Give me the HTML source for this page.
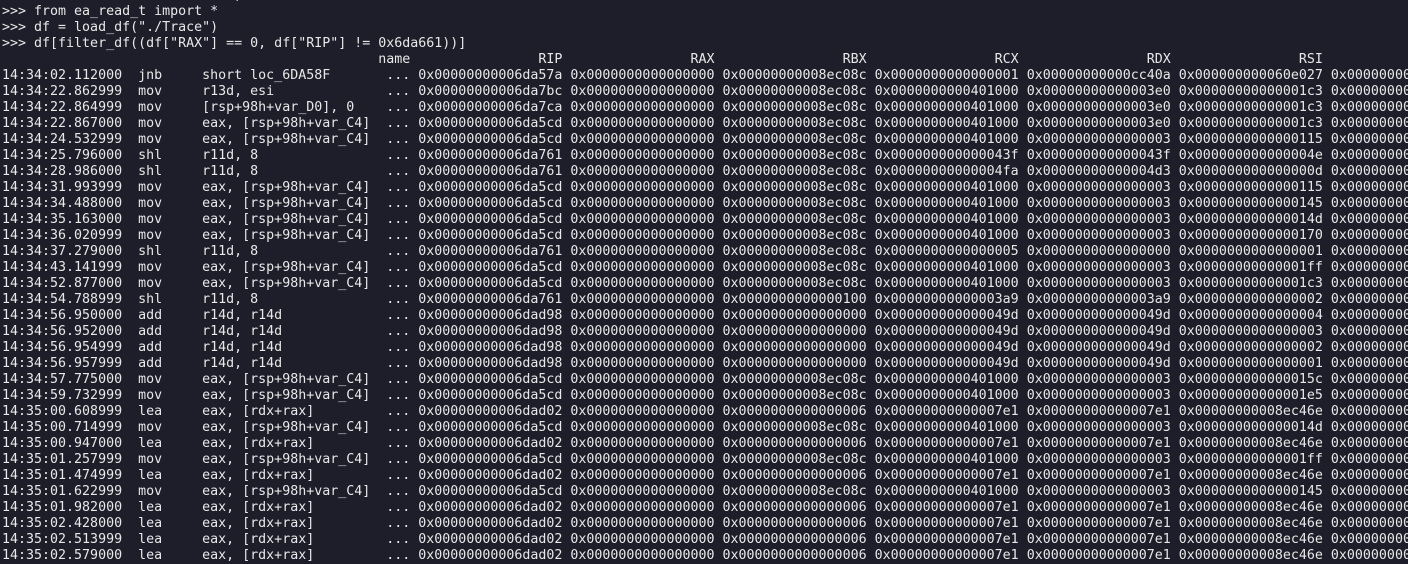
<!DOCTYPE html>
<html><head><meta charset="utf-8"><style>
html,body{margin:0;padding:0;width:1408px;height:558px;overflow:hidden;background:#1d1e29;}
pre{margin:0;position:absolute;left:2px;top:4px;font-family:"DejaVu Sans Mono","Liberation Mono",monospace;font-size:13.3px;line-height:16px;color:#e8e8e8;white-space:pre;}
#frag{position:absolute;left:2px;top:-12px;}
</style></head><body>
<pre id="frag">                             )</pre>
<pre id="t"></pre>
<script>
var C4="eax, [rsp+98h+var_C4]",S="r11d, 8",A="r14d, r14d",L="eax, [rdx+rax]";
var rows=[
["14:34:02.112000","jnb","short loc_6DA58F",["6da57a","0","8ec08c","1","cc40a","60e027"]],
["14:34:22.862999","mov","r13d, esi",["6da7bc","0","8ec08c","401000","3e0","1c3"]],
["14:34:22.864999","mov","[rsp+98h+var_D0], 0",["6da7ca","0","8ec08c","401000","3e0","1c3"]],
["14:34:22.867000","mov",C4,["6da5cd","0","8ec08c","401000","3e0","1c3"]],
["14:34:24.532999","mov",C4,["6da5cd","0","8ec08c","401000","3","115"]],
["14:34:25.796000","shl",S,["6da761","0","8ec08c","43f","43f","4e"]],
["14:34:28.986000","shl",S,["6da761","0","8ec08c","4fa","4d3","d"]],
["14:34:31.993999","mov",C4,["6da5cd","0","8ec08c","401000","3","115"]],
["14:34:34.488000","mov",C4,["6da5cd","0","8ec08c","401000","3","145"]],
["14:34:35.163000","mov",C4,["6da5cd","0","8ec08c","401000","3","14d"]],
["14:34:36.020999","mov",C4,["6da5cd","0","8ec08c","401000","3","170"]],
["14:34:37.279000","shl",S,["6da761","0","8ec08c","5","0","1"]],
["14:34:43.141999","mov",C4,["6da5cd","0","8ec08c","401000","3","1ff"]],
["14:34:52.877000","mov",C4,["6da5cd","0","8ec08c","401000","3","1c3"]],
["14:34:54.788999","shl",S,["6da761","0","100","3a9","3a9","2"]],
["14:34:56.950000","add",A,["6dad98","0","0","49d","49d","4"]],
["14:34:56.952000","add",A,["6dad98","0","0","49d","49d","3"]],
["14:34:56.954999","add",A,["6dad98","0","0","49d","49d","2"]],
["14:34:56.957999","add",A,["6dad98","0","0","49d","49d","1"]],
["14:34:57.775000","mov",C4,["6da5cd","0","8ec08c","401000","3","15c"]],
["14:34:59.732999","mov",C4,["6da5cd","0","8ec08c","401000","3","1e5"]],
["14:35:00.608999","lea",L,["6dad02","0","6","7e1","7e1","8ec46e"]],
["14:35:00.714999","mov",C4,["6da5cd","0","8ec08c","401000","3","14d"]],
["14:35:00.947000","lea",L,["6dad02","0","6","7e1","7e1","8ec46e"]],
["14:35:01.257999","mov",C4,["6da5cd","0","8ec08c","401000","3","1ff"]],
["14:35:01.474999","lea",L,["6dad02","0","6","7e1","7e1","8ec46e"]],
["14:35:01.622999","mov",C4,["6da5cd","0","8ec08c","401000","3","145"]],
["14:35:01.982000","lea",L,["6dad02","0","6","7e1","7e1","8ec46e"]],
["14:35:02.428000","lea",L,["6dad02","0","6","7e1","7e1","8ec46e"]],
["14:35:02.513999","lea",L,["6dad02","0","6","7e1","7e1","8ec46e"]],
["14:35:02.579000","lea",L,["6dad02","0","6","7e1","7e1","8ec46e"]]
];
function hx(v){return "0x"+v.padStart(16,"0");}
var out=['>>> from ea_read_t import *','>>> df = load_df("./Trace")','>>> df[filter_df((df["RAX"] == 0, df["RIP"] != 0x6da661))]'];
var h=" ".repeat(47)+"name";
["RIP","RAX","RBX","RCX","RDX","RSI","RDI"].forEach(function(n){h+=" "+n.padStart(18);});
out.push(h);
rows.forEach(function(r){
 var s=r[0]+"  "+r[1].padEnd(8)+r[2].padEnd(23)+"...";
 r[3].concat(["0"]).forEach(function(v){s+=" "+hx(v);});
 out.push(s);
});
document.getElementById("t").textContent=out.join("\n");
</script>
</body></html>
